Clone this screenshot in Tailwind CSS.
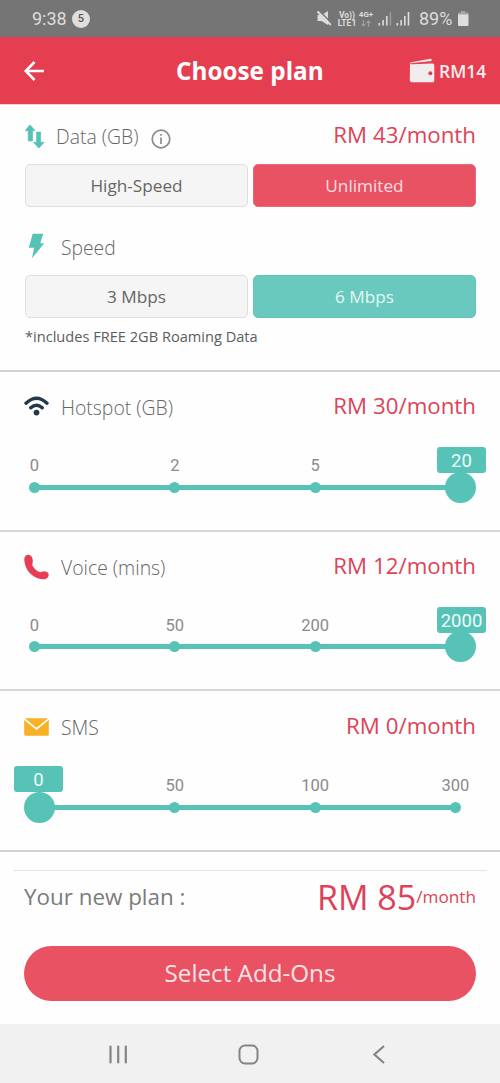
<!DOCTYPE html>
<html lang="en">
<head>
<meta charset="utf-8">
<title>Choose plan</title>
<script src="https://cdn.jsdelivr.net/npm/@tailwindcss/browser@4"></script>
</head>
<body class="w-[500px] h-[1083px] overflow-hidden bg-[#fefefe] font-['Open_Sans',sans-serif] text-[#666] flex flex-col">

<!-- Status bar -->
<div class="h-[37px] shrink-0 bg-[#757575] flex items-center font-[Roboto,sans-serif] text-[#dcdcdc] pl-[32px] pr-[31px]">
  <span class="text-[18px] leading-none w-[40px] whitespace-nowrap">9:38</span>
  <span class="size-[18px] rounded-full bg-[#dedede] text-[#555] text-[11px] font-medium flex items-center justify-center leading-none">5</span>
  <div class="ml-auto flex items-center">
    <svg class="w-[15px] h-[17px]" viewBox="0 0 15 17" fill="#dcdcdc"><path d="M.5 5h4L11 1v14L4.500 11H.5z"/><path d="M2 .5L15 13.500" stroke="#757575" stroke-width="1.500"/><path d="M.5 1.500L13.800 15" stroke="#dcdcdc" stroke-width="2"/></svg>
    <div class="ml-[5px] w-[20px] text-[8.500px] leading-[8px] font-bold text-center whitespace-nowrap">Vo))<br>LTE1</div>
    <div class="ml-[1px] w-[16px] flex flex-col items-center text-[8px] leading-[8px] font-bold whitespace-nowrap">4G+
      <svg class="w-[10px] h-[7px] mt-[1px]" viewBox="0 0 10 7" fill="none" stroke="#a0a0a0" stroke-width="1.200"><path d="M2.500 0v6M.5 4l2 2 2-2M7.500 7V1M5.500 3l2-2 2 2"/></svg>
    </div>
    <svg class="ml-[4px] w-[32px] h-[15px]" viewBox="0 0 32 15" fill="#dcdcdc"><path d="M.5 12h1.600v2.500H.5zM4.300 9h1.600v5.500H4.300zM8 5h1.600v9.500H8zM18.500 12h1.600v2.500h-1.600zM22.300 9h1.600v5.500h-1.600zM26 5h1.600v9.500H26zM29.700 1h1.600v13.500h-1.600z"/><path fill="#9b9b9b" d="M11.700 1h1.500v13.500h-1.500z"/></svg>
    <span class="ml-[9px] w-[35px] text-[18px] leading-none whitespace-nowrap">89%</span>
    <svg class="ml-[3px] w-[12px] h-[15px]" viewBox="0 0 12 15"><path d="M4 0h4v1.500h2.500a1 1 0 0 1 1 1V4H1V2.500a1 1 0 0 1 1-1h2z" fill="#a6a6a6"/><path d="M1 3.500h10.500V14a1 1 0 0 1-1 1H2a1 1 0 0 1-1-1z" fill="#dedede"/></svg>
  </div>
</div>

<!-- App bar -->
<header class="h-[68px] shrink-0 bg-[#e63e51] border-b border-[#fbd0d2] text-white flex items-center pl-[24px] pr-[12px]">
  <svg class="w-[20px] h-[20px]" viewBox="0 0 20 20" fill="none" stroke="#fff" stroke-width="2.600"><path d="M20 10H1.800M10.500 1L1.700 10l8.800 9"/></svg>
  <h1 class="ml-[132px] mt-[2px] w-[150px] text-[24.300px] font-bold leading-none whitespace-nowrap">Choose plan</h1>
  <svg class="ml-auto mt-[1px] w-[26px] h-[26px]" viewBox="0 0 26 26" fill="#f1eded"><path d="M1 4.500L21.500.8c.7-.1 1 .3 1 .9v1.500L2 5.500z"/><path d="M1 5c.5.900 1.500 1.300 2.500 1.200L23.500 5.500c1 0 1.800.8 1.800 1.800V22.500c0 1-.8 1.800-1.800 1.800H3c-1.300 0-2.200-.9-2.200-2.200z"/><path d="M2 5.600L22.500 3.600" stroke="#e63e51" stroke-width=".8"/><circle cx="21.300" cy="15.300" r="2" fill="#dc4456"/></svg>
  <span class="ml-[4px] mt-[2px] w-[49px] text-[17.500px] font-semibold leading-none whitespace-nowrap text-[#fbeeee]">RM14</span>
</header>

<!-- Data and speed -->
<section class="h-[267px] shrink-0 border-b-2 border-[#d2d2d2] px-[25px] pr-[24px] flex flex-col">
  <div class="h-[59px] flex items-center">
    <svg class="mt-[3px] w-[20px] h-[25px]" viewBox="0 0 20 25" fill="#55c2b5" stroke="#55c2b5" stroke-width=".6" stroke-linejoin="round"><path d="M5 .8l5.200 6H7.600V17H3.200V6.800H0zM13.800 24.200L8.400 18.200h3.100V8h4.200v10.200h3.500z"/></svg>
    <span class="ml-[11px] mt-[4px] w-[85px] text-[19.400px] font-light leading-none whitespace-nowrap">Data (GB)</span>
    <svg class="ml-[10px] mt-[8px] w-[20px] h-[20px]" viewBox="0 0 20 20" fill="none" stroke="#8c8c8c" stroke-width="1.700"><circle cx="10" cy="10" r="8.800"/><path d="M10 8.500V15M10 5v1.800"/></svg>
    <span class="ml-auto mt-[1px] text-[22.300px] leading-none text-[#dd4358] whitespace-nowrap">RM 43/month</span>
  </div>
  <div class="grid grid-cols-2 gap-[5px] h-[43px] text-[17.200px]">
    <div class="bg-[#f5f5f5] border border-[#dedede] rounded-[5px] flex items-center justify-center pt-[1px]">High-Speed</div>
    <div class="bg-[#e85263] border border-[#ea6a79] rounded-[5px] flex items-center justify-center pt-[1px] text-[#fbdfe2]">Unlimited</div>
  </div>
  <div class="h-[68px] flex items-center pt-[10px]">
    <svg class="ml-[3px] w-[17px] h-[26px]" viewBox="0 0 17 26" fill="#55c2b5"><path d="M4.700.7h10.500l-2.900 9.500h3.900L4 25.300l2.100-10.600H.8z"/></svg>
    <span class="ml-[16px] mt-[3px] text-[19.300px] font-light leading-none">Speed</span>
  </div>
  <div class="grid grid-cols-2 gap-[5px] h-[43px] text-[17.200px]">
    <div class="bg-[#f5f5f5] border border-[#dedede] rounded-[5px] flex items-center justify-center pt-[1px]">3 Mbps</div>
    <div class="bg-[#69c9be] border border-[#62c4b8] rounded-[5px] flex items-center justify-center pt-[1px] text-[#e4f7f4]">6 Mbps</div>
  </div>
  <p class="mt-[9px] text-[14.600px] leading-[18px] text-[#5c5c5c] whitespace-nowrap">*includes FREE 2GB Roaming Data</p>
</section>

<!-- Hotspot -->
<section class="h-[160px] shrink-0 border-b-2 border-[#d6d6d6] flex flex-col">
  <div class="h-[68px] pl-[24px] pr-[24px] flex items-center">
    <svg class="w-[25px] h-[20px]" viewBox="0 0 25 20" fill="none" stroke="#22394a" stroke-linecap="round" stroke-width="3.400"><path d="M2 7.200Q12.500-2.800 23 7.200M6.800 11.800Q12.500 6.600 18.200 11.800"/><circle cx="12.500" cy="16.600" r="2.900" fill="#22394a" stroke="none"/></svg>
    <span class="ml-[12px] mt-[3px] text-[19.400px] font-light leading-none whitespace-nowrap">Hotspot (GB)</span>
    <span class="ml-auto text-[22.300px] leading-none text-[#dd4358] whitespace-nowrap">RM 30/month</span>
  </div>
  <div class="relative ml-[34.500px] w-[421px] h-[80px] font-[Roboto,sans-serif] pt-[16px]">
    <div class="flex justify-between text-[16.500px] leading-[20px] text-[#8a8a8a]">
      <span class="w-0 flex justify-center">0</span><span class="w-0 flex justify-center">2</span><span class="w-0 flex justify-center">5</span><span class="w-0"></span>
    </div>
    <div class="mt-[8.500px] h-[5px] bg-[#57c3b6] flex justify-between items-center">
      <i class="size-[11px] -mx-[5.500px] rounded-full bg-[#57c3b6]"></i><i class="size-[11px] -mx-[5.500px] rounded-full bg-[#57c3b6]"></i><i class="size-[11px] -mx-[5.500px] rounded-full bg-[#57c3b6]"></i><i class="w-0"></i>
    </div>
    <div class="absolute left-[402.500px] top-[7px] w-[49px] flex flex-col items-center">
      <b class="w-full h-[26px] rounded-[3px] bg-[#57c3b6] text-[#effaf8] text-[18.500px] font-normal leading-[28px] text-center">20</b>
      <i class="-mt-[1px] mr-[2px] size-[31px] rounded-full bg-[#57c3b6]"></i>
    </div>
  </div>
</section>

<!-- Voice -->
<section class="h-[159px] shrink-0 border-b-2 border-[#d6d6d6] flex flex-col">
  <div class="h-[68px] pl-[24px] pr-[24px] flex items-center">
    <svg class="mt-[1px] w-[25px] h-[26px]" viewBox="0 0 25 26" fill="#e63e55"><path d="M3.800.8C1.700 1.100.3 2.800.3 5.200c0 5 2.300 10.800 6.200 14.500 4 4 8.800 5.600 13.300 5.600 2.600 0 4.900-1.900 4.900-4.500 0-2.300-2.200-3.600-4.600-3.600-2 0-2.700 1.200-4.200.9-2.700-.6-6-3.700-7.300-6.300-.6-1.200 0-2.200.2-4.300C9.100 3.600 6.800.4 3.800.8z"/></svg>
    <span class="ml-[12px] mt-[3px] text-[19.400px] font-light leading-none whitespace-nowrap">Voice (mins)</span>
    <span class="ml-auto text-[22.300px] leading-none text-[#dd4358] whitespace-nowrap">RM 12/month</span>
  </div>
  <div class="relative ml-[34.500px] w-[421px] h-[80px] font-[Roboto,sans-serif] pt-[16px]">
    <div class="flex justify-between text-[16.500px] leading-[20px] text-[#8a8a8a]">
      <span class="w-0 flex justify-center">0</span><span class="w-0 flex justify-center">50</span><span class="w-0 flex justify-center">200</span><span class="w-0"></span>
    </div>
    <div class="mt-[8px] h-[5px] bg-[#57c3b6] flex justify-between items-center">
      <i class="size-[11px] -mx-[5.500px] rounded-full bg-[#57c3b6]"></i><i class="size-[11px] -mx-[5.500px] rounded-full bg-[#57c3b6]"></i><i class="size-[11px] -mx-[5.500px] rounded-full bg-[#57c3b6]"></i><i class="w-0"></i>
    </div>
    <div class="absolute left-[402.500px] top-[7px] w-[49px] flex flex-col items-center">
      <b class="w-full h-[26px] rounded-[3px] bg-[#57c3b6] text-[#effaf8] text-[18.500px] font-normal leading-[28px] text-center">2000</b>
      <i class="-mt-[2px] mr-[2px] size-[31px] rounded-full bg-[#57c3b6]"></i>
    </div>
  </div>
</section>

<!-- SMS -->
<section class="h-[161px] shrink-0 border-b-2 border-[#d2d2d2] flex flex-col">
  <div class="h-[69px] pl-[24px] pr-[24px] flex items-center">
    <svg class="mt-[2px] w-[25px] h-[18px]" viewBox="0 0 25 18"><rect x=".2" y=".3" width="24.600" height="17.400" rx="1.500" fill="#f8b124"/><path d="M0 .7L12.500 11 25 .7" fill="none" stroke="#fff" stroke-width="1.700"/></svg>
    <span class="ml-[12px] mt-[5px] text-[19.400px] font-light leading-none whitespace-nowrap">SMS</span>
    <span class="ml-auto mt-[1px] text-[22.300px] leading-none text-[#dd4358] whitespace-nowrap">RM 0/month</span>
  </div>
  <div class="relative ml-[34.500px] w-[421px] h-[80px] font-[Roboto,sans-serif] pt-[16px]">
    <div class="flex justify-between text-[16.500px] leading-[20px] text-[#8a8a8a]">
      <span class="w-0"></span><span class="w-0 flex justify-center">50</span><span class="w-0 flex justify-center">100</span><span class="w-0 flex justify-center">300</span>
    </div>
    <div class="mt-[8.500px] h-[5px] bg-[#57c3b6] flex justify-between items-center">
      <i class="w-0"></i><i class="size-[11px] -mx-[5.500px] rounded-full bg-[#57c3b6]"></i><i class="size-[11px] -mx-[5.500px] rounded-full bg-[#57c3b6]"></i><i class="size-[11px] -mx-[5.500px] rounded-full bg-[#57c3b6]"></i>
    </div>
    <div class="absolute -left-[20.500px] top-[6px] w-[49px] flex flex-col items-center">
      <b class="w-full h-[26px] rounded-[3px] bg-[#57c3b6] text-[#effaf8] text-[18.500px] font-normal leading-[28px] text-center">0</b>
      <i class="-mt-[0.500px] ml-[2px] size-[31px] rounded-full bg-[#57c3b6]"></i>
    </div>
  </div>
</section>

<!-- Summary -->
<footer class="flex-1 flex flex-col pt-[18px]">
  <div class="mx-[13px] h-[54px] px-[11px] border-t border-[#e4e4e4] flex items-center text-[#dd4358]">
    <span class="-mt-[1px] text-[22.400px] leading-none text-[#7b7b7b] whitespace-nowrap">Your new plan :</span>
    <span class="ml-auto -mt-[1px] text-[34px] leading-none whitespace-nowrap">RM 85</span>
    <span class="-mt-[2px] text-[17.200px] leading-none whitespace-nowrap">/month</span>
  </div>
  <button class="mt-[21.500px] mx-[24px] h-[55px] rounded-full bg-[#e85263] text-[24.200px] text-[#fbe3e6] leading-none pt-[1px]">Select Add-Ons</button>
</footer>

<!-- System navigation -->
<nav class="h-[59px] shrink-0 bg-[#f1f1f1] flex items-center pt-[1px] pl-[109px]">
  <svg class="w-[18px] h-[19px]" viewBox="0 0 18 19" stroke="#858585" stroke-width="2.200" stroke-linecap="round"><path d="M1.500 1.500v16M9.200 1.500v16M16.800 1.500v16"/></svg>
  <svg class="ml-[111px] w-[21px] h-[21px]" viewBox="0 0 21 21" fill="none" stroke="#858585" stroke-width="2"><rect x="1.500" y="1.500" width="18" height="18" rx="5.500"/></svg>
  <svg class="ml-[114px] w-[12px] h-[19px]" viewBox="0 0 12 19" fill="none" stroke="#858585" stroke-width="2.200"><path d="M11 1L1.500 9.500 11 18"/></svg>
</nav>
</body>
</html>
